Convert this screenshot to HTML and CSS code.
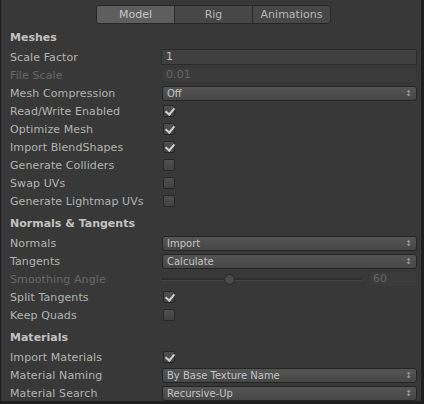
FILE: index.html
```html
<!DOCTYPE html>
<html>
<head>
<meta charset="utf-8">
<link rel="stylesheet" href="styles.css">
</head>
<body>
<div class="window">
  <div class="tabs">
    <div class="tab active">Model</div>
    <div class="tab">Rig</div>
    <div class="tab">Animations</div>
  </div>

  <div class="section">
    <div class="header">Meshes</div>
    <div class="row"><span class="label">Scale Factor</span><span class="field">1</span></div>
    <div class="row"><span class="label dim">File Scale</span><span class="field dimfield">0.01</span></div>
    <div class="row"><span class="label">Mesh Compression</span><span class="popup">Off</span></div>
    <div class="row"><span class="label">Read/Write Enabled</span><span class="check on"></span></div>
    <div class="row"><span class="label">Optimize Mesh</span><span class="check on"></span></div>
    <div class="row"><span class="label">Import BlendShapes</span><span class="check on"></span></div>
    <div class="row"><span class="label">Generate Colliders</span><span class="check"></span></div>
    <div class="row"><span class="label">Swap UVs</span><span class="check"></span></div>
    <div class="row"><span class="label">Generate Lightmap UVs</span><span class="check"></span></div>
  </div>

  <div class="section">
    <div class="header">Normals &amp; Tangents</div>
    <div class="row"><span class="label">Normals</span><span class="popup">Import</span></div>
    <div class="row"><span class="label">Tangents</span><span class="popup">Calculate</span></div>
    <div class="row"><span class="label dim">Smoothing Angle</span>
      <span class="slider"><span class="track"><span class="thumb"></span></span><span class="field dimfield num">60</span></span>
    </div>
    <div class="row"><span class="label">Split Tangents</span><span class="check on"></span></div>
    <div class="row"><span class="label">Keep Quads</span><span class="check"></span></div>
  </div>

  <div class="section">
    <div class="header">Materials</div>
    <div class="row"><span class="label">Import Materials</span><span class="check on"></span></div>
    <div class="row"><span class="label">Material Naming</span><span class="popup">By Base Texture Name</span></div>
    <div class="row"><span class="label">Material Search</span><span class="popup">Recursive-Up</span></div>
  </div>
</div>
</body>
</html>
```

FILE: styles.css
```css
html, body {
  margin: 0;
  padding: 0;
  background: #383838;
}
.window {
  width: 424px;
  height: 404px;
  box-sizing: border-box;
  border-left: 1px solid #1e1e1e;
  border-right: 3px solid #1e1e1e;
  border-bottom: 3px solid #1e1e1e;
  background: #383838;
  font-family: "DejaVu Sans", sans-serif;
  font-size: 11px;
  color: #b4b4b4;
  padding: 0 4px 0 9px;
  overflow: hidden;
}
.tabs {
  display: flex;
  margin: 5px 0 0 86px;
  width: 233px;
  height: 17px;
  border: 1px solid #262626;
  border-radius: 3px;
  overflow: hidden;
}
.tab {
  flex: 1;
  background: #474747;
  color: #b8b8b8;
  text-align: center;
  line-height: 17px;
  font-size: 11px;
  border-left: 1px solid #2a2a2a;
}
.tab:first-child { border-left: none; }
.tab.active {
  background: #5e5e5e;
  color: #c8c8c8;
}
.section { display: flex; flex-direction: column; }
.header {
  font-weight: bold;
  color: #c2c2c2;
  height: 20px;
  line-height: 20px;
  margin-top: 4px;
}
.section + .section .header { margin-top: 4px; }
.row {
  display: flex;
  align-items: center;
  height: 18px;
  letter-spacing: 0.1px;
}
.label {
  width: 151px;
  flex: none;
  white-space: nowrap;
}
.label.dim { color: #686868; }
.field {
  flex: 1;
  height: 16px;
  box-sizing: border-box;
  background: #404040;
  border: 1px solid #2b2b2b;
  padding-left: 4px;
  line-height: 14px;
  color: #c4c4c4;
}
.field.dimfield {
  background: #3b3b3b;
  border-color: #363636;
  color: #666;
}
.popup {
  flex: 1;
  height: 15px;
  box-sizing: border-box;
  margin-left: 1px;
  background: linear-gradient(#555, #464646);
  border: 1px solid #242424;
  border-radius: 3px;
  padding-left: 4px;
  line-height: 13px;
  font-size: 10px;
  color: #c4c4c4;
  position: relative;
  letter-spacing: 0;
}
.popup::before {
  content: "\2195";
  position: absolute;
  right: 4px;
  top: 0;
  font-size: 8px;
  line-height: 13px;
  color: #aaa;
}
.check {
  margin-left: 2px;
  width: 12px;
  height: 12px;
  box-sizing: border-box;
  border: 1px solid #262626;
  border-radius: 2px;
  background: linear-gradient(#4f4f4f, #424242);
  position: relative;
}
.check.on::after {
  content: "";
  position: absolute;
  left: 3px;
  top: 0px;
  width: 4px;
  height: 7px;
  border-right: 2px solid #cfcfcf;
  border-bottom: 2px solid #cfcfcf;
  transform: rotate(40deg);
}
.slider {
  flex: 1;
  display: flex;
  align-items: center;
  gap: 6px;
}
.track {
  flex: 1;
  height: 2px;
  background: #2e2e2e;
  border-bottom: 1px solid #444;
  position: relative;
}
.thumb {
  position: absolute;
  left: 63px;
  top: -4px;
  width: 9px;
  height: 9px;
  border-radius: 50%;
  background: #4a4a4a;
  border: 1px solid #262626;
}
.slider .field { flex: none; width: 49px; }
```
